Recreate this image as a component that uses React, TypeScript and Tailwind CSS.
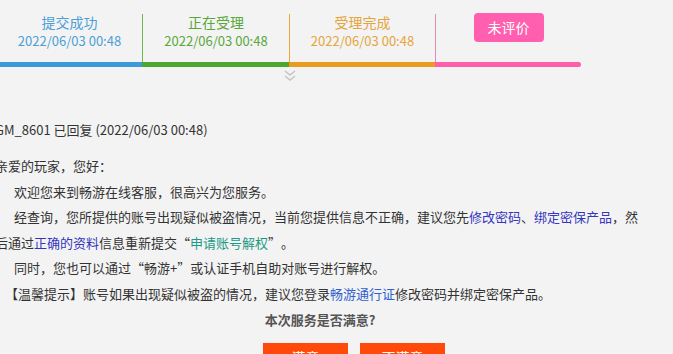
import React from "react";

const font = { fontFamily: '"Noto Sans CJK SC", "Noto Sans", sans-serif' };

function QO() {
  return <span className="inline-block w-[13px] text-right">“</span>;
}
function QC() {
  return <span className="inline-block w-[13px] text-left">”</span>;
}

function Step({ title, date, color, border, width }: { title: string; date: string; color: string; border: string; width: string }) {
  return (
    <div className={`${width} h-[62px] pt-[14px]`}>
      <div className={`h-[48px] flex flex-col items-center ${border}`}>
        <div className={`text-[14px] leading-[16px] ${color}`}>{title}</div>
        <div className={`text-[13px] leading-[18px] mt-[2px] ${color}`}>{date}</div>
      </div>
    </div>
  );
}

export default function App() {
  return (
    <div lang="zh-CN" className="w-[673px] h-[354px] overflow-hidden bg-[#f3f3f3] text-[#333]" style={font}>
      <div className="flex ml-[-3px]">
        <Step title="提交成功" date="2022/06/03 00:48" color="text-[#4d9fd6]" border="" width="w-[145px]" />
        <Step title="正在受理" date="2022/06/03 00:48" color="text-[#5aa83c]" border="border-l border-[#6db84f]" width="w-[147px]" />
        <Step title="受理完成" date="2022/06/03 00:48" color="text-[#e6a53c]" border="border-l border-[#eaa73a]" width="w-[146px]" />
        <div className="w-[146px] h-[62px] pt-[14px]">
          <div className="h-[48px] border-l border-[#e58bb5] flex justify-center">
            <div className="mt-[-1px] w-[70px] h-[29px] rounded-[4px] bg-[#ff5fae] text-white text-[14px] flex items-center justify-center">
              未评价
            </div>
          </div>
        </div>
      </div>
      <div className="flex h-[5px]">
        <div className="w-[142px] bg-[#3d9ad8]" />
        <div className="w-[147px] bg-[#4aa832]" />
        <div className="w-[146px] bg-[#e89c20]" />
        <div className="w-[146px] bg-[#ff5fa8] rounded-r-full" />
      </div>
      <div className="ml-[283px] h-[15px] flex items-center">
        <svg width="14" height="14" viewBox="0 0 14 14" fill="none" stroke="#c4c4c4" strokeWidth="1.4">
          <path d="M2 3l5 4 5-4" />
          <path d="M2 8l5 4 5-4" />
        </svg>
      </div>
      <div className="ml-[-5px] mt-[38px] text-[13px]">
        <div className="leading-[20px]">GM_8601 已回复 (2022/06/03 00:48)</div>
        <div className="mt-[13px] leading-[25.6px]">
          <div>亲爱的玩家，您好：</div>
          <div className="pl-[19px]">欢迎您来到畅游在线客服，很高兴为您服务。</div>
          <div className="pl-[19px] whitespace-nowrap">
            经查询，您所提供的账号出现疑似被盗情况，当前您提供信息不正确，建议您先
            <span className="text-[#3535c0]">修改密码</span>、<span className="text-[#3535c0]">绑定密保产品</span>，然
          </div>
          <div className="whitespace-nowrap">
            后通过<span className="text-[#3535c0]">正确的资料</span>信息重新提交<QO /><span className="text-[#1d9a86]">申请账号解权</span><QC />。
          </div>
          <div className="pl-[19px] whitespace-nowrap">
            同时，您也可以通过<QO />畅游+<QC />或认证手机自助对账号进行解权。
          </div>
          <div className="pl-[10px] whitespace-nowrap">
            【温馨提示】账号如果出现疑似被盗的情况，建议您登录<span className="text-[#2f5fcf]">畅游通行证</span>修改密码并绑定密保产品。
          </div>
        </div>
      </div>
      <div className="mt-[3px] w-[640px] text-center text-[13px] leading-[20px] font-bold text-[#555]">本次服务是否满意?</div>
      <div className="mt-[13px] pl-[263px] flex gap-[12px]">
        <div className="w-[85px] h-[30px] bg-[#ff4a0a] text-white text-[14px] flex items-center justify-center">满意</div>
        <div className="w-[85px] h-[30px] bg-[#ff4a0a] text-white text-[14px] flex items-center justify-center">不满意</div>
      </div>
    </div>
  );
}
